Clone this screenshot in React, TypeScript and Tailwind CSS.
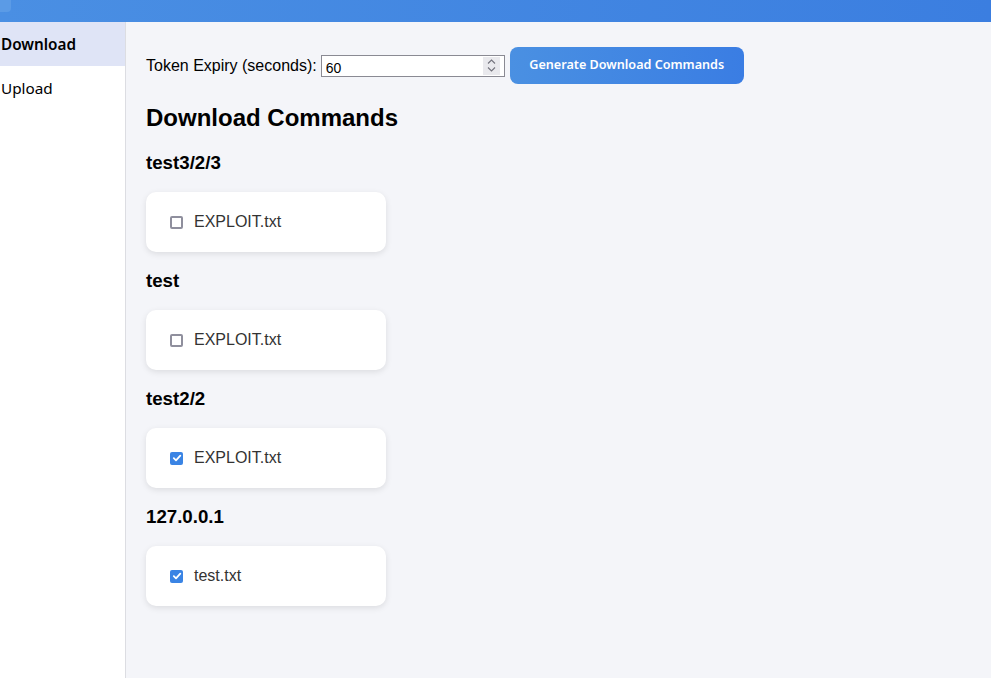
import { useState } from 'react'

type Group = { name: string; files: { name: string; checked: boolean }[] }

const groups: Group[] = [
  { name: 'test3/2/3', files: [{ name: 'EXPLOIT.txt', checked: false }] },
  { name: 'test', files: [{ name: 'EXPLOIT.txt', checked: false }] },
  { name: 'test2/2', files: [{ name: 'EXPLOIT.txt', checked: true }] },
  { name: '127.0.0.1', files: [{ name: 'test.txt', checked: true }] },
]

function FileRow({ name, initial }: { name: string; initial: boolean }) {
  const [checked, setChecked] = useState(initial)
  return (
    <label className="mt-[18px] flex h-[60px] w-[240px] cursor-pointer items-center rounded-[10px] bg-white px-[24px] shadow-[0_2px_6px_rgba(0,0,0,0.1)]">
      <input type="checkbox" checked={checked} onChange={() => setChecked(!checked)} className="sr-only" />
      {checked ? (
        <span className="flex h-[13px] w-[13px] items-center justify-center rounded-[2px] bg-[#3a84e4]">
          <svg width="10" height="10" viewBox="0 0 10 10" fill="none">
            <path d="M1.8 5.2 4 7.3 8.3 2.6" stroke="white" strokeWidth="1.8" strokeLinecap="round" strokeLinejoin="round" />
          </svg>
        </span>
      ) : (
        <span className="h-[13px] w-[13px] rounded-[2px] border-2 border-[#8f8f9d] bg-white" />
      )}
      <span className="ml-[11px] text-[16px] text-[#333]">{name}</span>
    </label>
  )
}

export default function App() {
  const [expiry, setExpiry] = useState('60')
  const [tab, setTab] = useState('Download')

  return (
    <div className="flex h-[678px] flex-col overflow-hidden bg-[#f4f5f9] font-['Liberation_Sans',Arial,sans-serif]">
      <div className="relative h-[22px] shrink-0 bg-gradient-to-r from-[#4a8fe3] to-[#3b7ee0]">
        <div className="absolute left-0 top-0 h-[12px] w-[11px] rounded-br-sm bg-[#5b9be6]" />
      </div>
      <div className="flex min-h-0 flex-1">
        <nav className="w-[126px] shrink-0 border-r border-[#dcdde2] bg-white font-['Noto_Sans',sans-serif] text-[15.3px] text-black">
          {['Download', 'Upload'].map((t) => (
            <button
              key={t}
              onClick={() => setTab(t)}
              className={`block h-[44px] w-full pl-[1px] text-left ${tab === t ? 'bg-[#dfe4f6] font-semibold' : ''}`}
            >
              {t}
            </button>
          ))}
        </nav>
        <main className="flex-1 pl-[20px] pt-[25px]">
          <div className="flex items-center text-[16px] text-black">
            <label htmlFor="expiry">Token Expiry (seconds):</label>
            <div className="relative ml-[4px] h-[22px] w-[184px] border border-[#8a8a93] bg-white">
              <input
                id="expiry"
                type="text"
                inputMode="numeric"
                value={expiry}
                onChange={(e) => setExpiry(e.target.value)}
                className="h-full w-full bg-transparent pl-[4px] pr-[20px] text-[14px] text-black outline-none"
              />
              <div className="absolute right-[4px] top-[1px] flex h-[18px] w-[17px] flex-col items-center justify-center gap-[3px] bg-[#e9e9ed]">
                <svg width="9" height="5" viewBox="0 0 9 5" fill="none">
                  <path d="M1 4.5 4.5 1 8 4.5" stroke="#73737d" strokeWidth="1.1" />
                </svg>
                <svg width="9" height="5" viewBox="0 0 9 5" fill="none">
                  <path d="M1 0.5 4.5 4 8 0.5" stroke="#73737d" strokeWidth="1.1" />
                </svg>
              </div>
            </div>
            <button className="ml-[5px] h-[37px] w-[234px] rounded-[8px] bg-gradient-to-r from-[#4a90e2] to-[#3a7de3] font-['Noto_Sans',sans-serif] text-[12.6px] font-semibold text-white">
              Generate Download Commands
            </button>
          </div>
          <h2 className="mt-[20px] text-[24px] font-bold leading-[28px] text-black">Download Commands</h2>
          <div className="pt-[2px]">
            {groups.map((g) => (
              <section key={g.name}>
                <h3 className="mt-[18px] text-[18.7px] font-bold leading-[22px] text-black">{g.name}</h3>
                {g.files.map((f) => (
                  <FileRow key={f.name} name={f.name} initial={f.checked} />
                ))}
              </section>
            ))}
          </div>
        </main>
      </div>
    </div>
  )
}
